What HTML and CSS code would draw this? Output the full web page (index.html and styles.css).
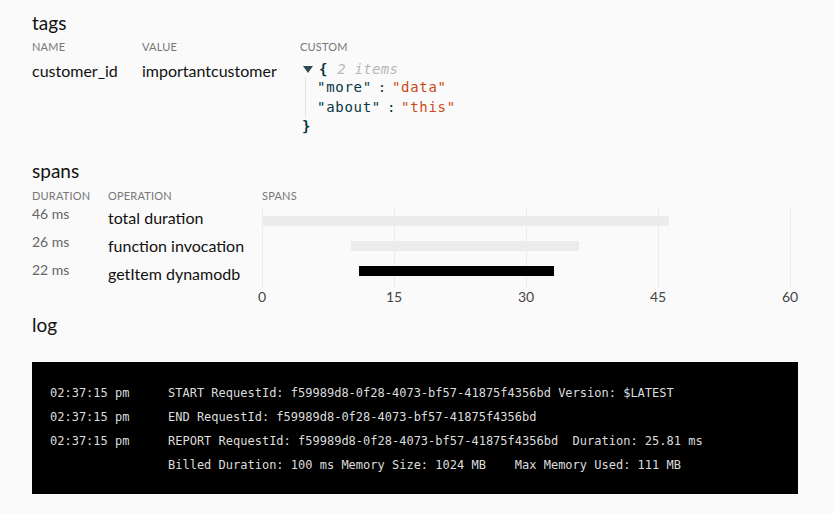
FILE: index.html
```html
<!DOCTYPE html>
<html>
<head>
<meta charset="utf-8">
<link rel="stylesheet" href="styles.css">
</head>
<body>
<div class="page">
  <section class="tags">
    <h2 class="title">tags</h2>
    <div class="tag-grid">
      <div class="col-head">Name</div>
      <div class="col-head">Value</div>
      <div class="col-head">Custom</div>
      <div class="cell">customer_id</div>
      <div class="cell">importantcustomer</div>
      <div class="json">
        <div class="json-open"><span class="caret"></span><span class="brace">{</span><span class="count">2 items</span></div>
        <div class="json-body">
          <div class="json-row"><span class="key">"more"</span><span class="colon">:</span><span class="val">"data"</span></div>
          <div class="json-row"><span class="key">"about"</span><span class="colon">:</span><span class="val">"this"</span></div>
        </div>
        <div class="json-close brace">}</div>
      </div>
    </div>
  </section>

  <section class="spans">
    <h2 class="title">spans</h2>
    <div class="span-head">
      <div class="col-head c-dur">Duration</div>
      <div class="col-head c-op">Operation</div>
      <div class="col-head c-chart">Spans</div>
    </div>
    <div class="span-body">
      <div class="span-list">
        <div class="span-row"><span class="dur">46 ms</span><span class="op">total duration</span></div>
        <div class="span-row"><span class="dur">26 ms</span><span class="op">function invocation</span></div>
        <div class="span-row"><span class="dur">22 ms</span><span class="op">getItem dynamodb</span></div>
      </div>
      <div class="chart">
        <div class="plot">
          <div class="grid-line" style="left:0%"></div>
          <div class="grid-line" style="left:25%"></div>
          <div class="grid-line" style="left:50%"></div>
          <div class="grid-line" style="left:75%"></div>
          <div class="grid-line" style="left:100%"></div>
          <div class="bar-track"><div class="bar light" style="margin-left:0%;width:77.1%"></div></div>
          <div class="bar-track"><div class="bar light" style="margin-left:16.9%;width:43.2%"></div></div>
          <div class="bar-track"><div class="bar dark" style="margin-left:18.4%;width:36.9%"></div></div>
        </div>
        <div class="ticks">
          <span class="tick" style="left:0%">0</span>
          <span class="tick" style="left:25%">15</span>
          <span class="tick" style="left:50%">30</span>
          <span class="tick" style="left:75%">45</span>
          <span class="tick" style="left:100%">60</span>
        </div>
      </div>
    </div>
  </section>

  <section class="log">
    <h2 class="title">log</h2>
    <div class="console">
      <div class="line"><span class="time">02:37:15 pm</span><span class="msg">START RequestId: f59989d8-0f28-4073-bf57-41875f4356bd Version: $LATEST</span></div>
      <div class="line"><span class="time">02:37:15 pm</span><span class="msg">END RequestId: f59989d8-0f28-4073-bf57-41875f4356bd</span></div>
      <div class="line"><span class="time">02:37:15 pm</span><span class="msg">REPORT RequestId: f59989d8-0f28-4073-bf57-41875f4356bd&nbsp; Duration: 25.81 ms</span></div>
      <div class="line"><span class="time"></span><span class="msg">Billed Duration: 100 ms Memory Size: 1024 MB&nbsp;&nbsp;&nbsp; Max Memory Used: 111 MB</span></div>
    </div>
  </section>
</div>
</body>
</html>
```

FILE: styles.css
```css
* { box-sizing: border-box; }
html, body { margin: 0; padding: 0; }
body {
  background: #fafafa;
  font-family: Lato, "Noto Sans", sans-serif;
  color: #111;
}
.page {
  padding: 11px 36px 0 32px;
}
.title {
  margin: 0;
  font-size: 19px;
  font-weight: 400;
  line-height: 24px;
  color: #111;
}
.col-head {
  font-size: 11px;
  text-transform: uppercase;
  color: #777;
  letter-spacing: 0.2px;
  line-height: 14px;
}
/* tags */
.tag-grid {
  display: grid;
  grid-template-columns: 110px 158px 1fr;
  margin-top: 5px;
  row-gap: 7px;
}
.cell {
  font-size: 16px;
  line-height: 19px;
}
.json {
  font-family: "DejaVu Sans Mono", monospace;
  font-size: 14px;
  letter-spacing: 0.7px;
  line-height: 20px;
  color: #073642;
  margin-top: -2px;
  padding-bottom: 3px;
}
.json-open { display: flex; align-items: center; }
.caret {
  width: 0; height: 0;
  border-left: 5px solid transparent;
  border-right: 5px solid transparent;
  border-top: 7px solid #2b4a52;
  margin: 0 6px 0 3px;
}
.brace { font-weight: 700; color: #073642; }
.count { color: #b8b8b8; font-style: italic; margin-left: 9px; letter-spacing: 0.3px; }
.json-body {
  margin-top: -2px;
  margin-left: 5px;
  padding-left: 11px;
  border-left: 1px solid #e2e2e2;
}
.json-row .colon { margin: 0 5px 0 6px; }
.json-row .val { color: #cb4b16; }
.json-close { margin-left: 2px; margin-top: -1px; }

/* spans */
.spans { margin-top: 20px; }
.span-head { display: flex; margin-top: 6px; }
.c-dur { width: 76px; }
.c-op { width: 154px; }
.span-body { display: flex; margin-top: 0; }
.span-list { width: 230px; }
.span-row {
  display: flex;
  height: 28px;
  align-items: flex-start;
}
.dur {
  width: 76px;
  font-size: 14px;
  color: #666;
  line-height: 16px;
  padding-top: 3px;
}
.op {
  font-size: 16px;
  line-height: 19px;
  padding-top: 5px;
}
.chart { width: 528px; }
.plot {
  position: relative;
  height: 80px;
  padding-top: 8px;
  margin-top: 5px;
}
.grid-line {
  position: absolute;
  top: 0; bottom: 0;
  width: 1px;
  background: #ececec;
}
.bar-track { height: 25px; position: relative; }
.bar { height: 10px; }
.bar.light { background: #ececec; }
.bar.dark { background: #000; }
.ticks {
  position: relative;
  height: 20px;
  margin-top: 0;
}
.tick {
  position: absolute;
  top: 0;
  transform: translateX(-50%);
  font-size: 14px;
  color: #444;
}

/* log */
.log { margin-top: 5px; }
.console {
  margin-top: 25px;
  background: #000;
  height: 132px;
  padding: 19px 18px;
  font-family: "DejaVu Sans Mono", monospace;
  font-size: 12px;
  color: #dcdcdc;
}
.line { display: flex; line-height: 24px; white-space: pre; }
.time { width: 118px; }
```
